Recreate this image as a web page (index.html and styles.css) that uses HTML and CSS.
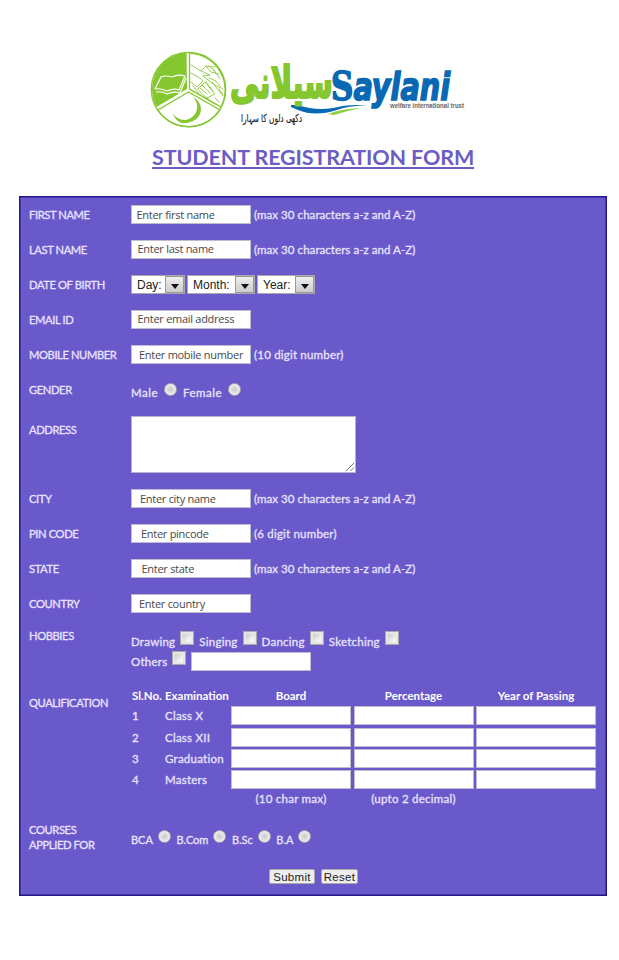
FILE: index.html
```html
<!DOCTYPE html>
<html lang="en">
<head>
<meta charset="utf-8">
<title>Student Registration Form</title>
<link rel="stylesheet" href="styles.css">
</head>
<body>
<header class="header">
<svg class="logo" viewBox="0 0 320 86" width="320" height="86" role="img" aria-label="Saylani Welfare International Trust">
<!-- emblem -->
<path d="M38 41 L37.500 4.500 A37 37 0 0 0 7.500 59Z" fill="#85c72f"/>
<path d="M40.500 41 V5 A37 37 0 0 1 72 59Z" fill="#fff" stroke="#85c72f" stroke-width="1.300"/>
<path d="M39.500 44 L9 62 A37 37 0 0 0 71 62Z" fill="#fff" stroke="#85c72f" stroke-width="1.300"/>
<path d="M6 41 L12 29 Q16 27 23 29 Q29 26 36 28 L30 42 Q25 40 18 43 Q11 40 6 41Z M7 44 Q12 43 18 46 Q25 43 31 45 L37 30" fill="none" stroke="#fff" stroke-width="1.200" stroke-linejoin="round"/>
<path d="M44 49 C56 55 55 73 37 75 C31 76 26 72 23.500 65 C28 72 35 73 40 71 C49 67 51 56 44 49Z" fill="#85c72f"/>
<g fill="none" stroke="#8bc83d" stroke-width=".9" stroke-linecap="round" stroke-linejoin="round">
<path d="M42 17 L52 23 L57 18 L66 19 M42 25 L51 30 L54 33 L48 39 L42 34 M49 41 L56 34 L66 46 L58 50Z M52 23 L61 27 L54 28 L63 35 L71 40 M63 34 L74 48 M57 49 L65 56 M57 18 L62 24 L70 26 M44 38 L50 46 L62 54 M60 30 L67 33 L74 42"/>
<path d="M50 39 L58 46 M53 37 L61 45 M57 34 L64 43 M64 21 L71 31 M60 18 L66 23 M70 41 L74 47 M66 50 L70 54"/>
</g>
<circle cx="39.500" cy="41.500" r="37.200" fill="none" stroke="#85c72f" stroke-width="1.300"/>
<!-- word mark -->
<path d="M142 57 L149 57 Q166 63 184 60 Q202 55 219 58 Q203 57 188 62 Q166 69 149 62 L142 59Z" fill="#0968b3"/>
<path d="M179 66 Q191 61 212 60 Q197 63 185 67Z" fill="#91cd42"/>
<text class="urdu-mark" x="184" y="50" direction="rtl" textLength="103" lengthAdjust="spacingAndGlyphs">سیلانی</text>
<text class="urdu-line" x="153" y="74" direction="rtl" textLength="61" lengthAdjust="spacingAndGlyphs">دکھی دلوں کا سہارا</text>
<text class="word-mark" x="182" y="52" textLength="119" lengthAdjust="spacingAndGlyphs"><tspan class="word-s">S</tspan>aylani</text>
<text class="word-line" x="241" y="59.500" textLength="74" lengthAdjust="spacingAndGlyphs">welfare international trust</text>
</svg>
<h1 class="title">STUDENT REGISTRATION FORM</h1>
</header>
<main class="form">
<div class="row"><span class="label">FIRST NAME</span><span class="input">Enter first name</span><span class="hint">(max 30 characters a-z and A-Z)</span></div>
<div class="row"><span class="label">LAST NAME</span><span class="input ph-last">Enter last name</span><span class="hint">(max 30 characters a-z and A-Z)</span></div>
<div class="row"><span class="label">DATE OF BIRTH</span><span class="select s-day">Day:<i class="arrow"></i></span><span class="select s-month">Month:<i class="arrow"></i></span><span class="select s-year">Year:<i class="arrow"></i></span></div>
<div class="row"><span class="label">EMAIL ID</span><span class="input ph-last">Enter email address</span></div>
<div class="row"><span class="label">MOBILE NUMBER</span><span class="input ph-mobile">Enter mobile number</span><span class="hint digits">(10 digit number)</span></div>
<div class="row"><span class="label">GENDER</span><div class="options gender"><span class="opt">Male</span><i class="radio"></i><span class="opt">Female</span><i class="radio"></i></div></div>
<div class="row address"><span class="label">ADDRESS</span><div class="textarea"><svg width="10" height="10" viewBox="0 0 10 10"><path d="M1 9 L9 1 M5.500 9 L9 5.500" stroke="#777" fill="none"/></svg></div></div>
<div class="row"><span class="label">CITY</span><span class="input ph-city">Enter city name</span><span class="hint">(max 30 characters a-z and A-Z)</span></div>
<div class="row"><span class="label">PIN CODE</span><span class="input ph-pin">Enter pincode</span><span class="hint digits">(6 digit number)</span></div>
<div class="row"><span class="label">STATE</span><span class="input ph-state">Enter state</span><span class="hint">(max 30 characters a-z and A-Z)</span></div>
<div class="row"><span class="label">COUNTRY</span><span class="input ph-mobile">Enter country</span></div>
<div class="row hobbies"><span class="label">HOBBIES</span><div class="stack">
<div class="options"><span class="opt">Drawing</span><i class="check"></i><span class="opt">Singing</span><i class="check"></i><span class="opt">Dancing</span><i class="check"></i><span class="opt">Sketching</span><i class="check"></i></div>
<div class="options others"><span class="opt">Others</span><i class="check"></i><span class="input"></span></div></div></div>
<div class="row qualification"><span class="label">QUALIFICATION</span><div class="table">
<b class="head-left">Sl.No.</b><b class="head-left">Examination</b><b>Board</b><b>Percentage</b><b>Year of Passing</b>
<span>1</span><span>Class X</span><i class="cell"></i><i class="cell"></i><i class="cell"></i>
<span>2</span><span>Class XII</span><i class="cell"></i><i class="cell"></i><i class="cell"></i>
<span>3</span><span>Graduation</span><i class="cell"></i><i class="cell"></i><i class="cell"></i>
<span>4</span><span>Masters</span><i class="cell"></i><i class="cell"></i><i class="cell"></i>
<span></span><span></span><span class="note">(10 char max)</span><span class="note">(upto 2 decimal)</span><span></span>
</div></div>
<div class="row courses"><span class="label">COURSES<br>APPLIED FOR</span><div class="options"><span class="opt">BCA</span><i class="radio"></i><span class="opt">B.Com</span><i class="radio"></i><span class="opt">B.Sc</span><i class="radio"></i><span class="opt">B.A</span><i class="radio"></i></div></div>
<div class="actions"><span class="button submit">Submit</span><span class="button reset">Reset</span></div>
</main>
</body>
</html>
```
FILE: styles.css
```css
* { box-sizing: border-box; }
body { margin: 0; width: 619px; height: 960px; background: #fff; font-family: Lato, "Open Sans", sans-serif; overflow: hidden; }
i { font-style: normal; display: block; flex: none; }
.header { height: 196px; padding-top: 48px; }
.logo { display: block; margin-left: 149px; overflow: visible; }
.urdu-mark { font: bold 45px "DejaVu Sans", sans-serif; fill: #85c72f; stroke: #85c72f; stroke-width: 2.2px; }
.urdu-line { font: 11px "DejaVu Sans", sans-serif; fill: #222; stroke: #222; stroke-width: .2px; }
.word-mark { font: italic bold 37px "DejaVu Sans", sans-serif; fill: #0968b3; stroke: #0968b3; stroke-width: 1.6px; }
.word-s { font: bold 40px "DejaVu Serif", serif; }
.word-line { font: bold 6.5px "Liberation Sans", sans-serif; fill: #666; }
.title { margin: 9px 0 0 152px; width: 322px; font-size: 21.5px; letter-spacing: -.12px; line-height: 28px; font-weight: 700; color: #6c5dc4; white-space: nowrap; text-decoration: underline; text-decoration-thickness: 1.5px; text-underline-offset: 2px; }
.form { margin-left: 19px; width: 588px; height: 700px; border: 1px solid #22178a; box-shadow: inset 0 0 0 .5px #22178a; background: #6a59cb; color: #e9e3ff; font-size: 11.5px; font-weight: 400; -webkit-text-stroke: .3px currentColor; letter-spacing: .3px; }
.row { height: 35px; display: flex; align-items: center; padding-left: 9px; }
.label { width: 102px; flex: none; white-space: nowrap; line-height: 15px; font-size: 11.2px; letter-spacing: -.4px; }
.input { width: 120px; height: 19px; flex: none; background: #fff; border: 1px solid #c0bccf; color: #484848; font: 400 11px/17px "Open Sans", sans-serif; letter-spacing: -.28px; -webkit-text-stroke: 0; white-space: nowrap; padding-left: 4.5px; }
.ph-last { padding-left: 5.5px; line-height: 16px; }
.ph-mobile { padding-left: 7px; }
.ph-city { padding-left: 8px; }
.ph-pin { padding-left: 9px; }
.ph-state { padding-left: 9.5px; }
.hint { margin-left: 3px; white-space: nowrap; letter-spacing: .06px; }
.digits { letter-spacing: .2px; }
.select { height: 19px; background: #fff; border: 1px solid #aaa; display: flex; justify-content: space-between; align-items: center; color: #222; font: 12px "Liberation Sans", sans-serif; letter-spacing: 0; -webkit-text-stroke: 0; padding-left: 5px; margin-right: 2px; }
.s-day { width: 54px; }
.s-month { width: 68px; }
.s-year { width: 58px; }
.arrow { width: 19px; height: 17px; border: 1px solid #999; background: linear-gradient(#eee, #ccc); display: flex; align-items: center; justify-content: center; padding-top: 4px; }
.arrow::before { content: ""; border: 4.5px solid transparent; border-top: 5px solid #111; border-bottom: 0; }
.options { display: flex; align-items: center; white-space: nowrap; }
.gender { padding-top: 6px; letter-spacing: .5px; }
.radio { width: 13px; height: 13px; border-radius: 50%; border: 1px solid #aaa; background: radial-gradient(#c8c8c8, #f2f2f2 75%); margin: -6px 6px 0 6px; }
.check { width: 14px; height: 14px; border: 1px solid #aaa; background: linear-gradient(135deg, #bbb, #f6f6f6 70%); box-shadow: inset 0 0 0 2px #e6e6e6; margin: -7px 5px 0 5px; }
.address { height: 74px; align-items: flex-start; padding-top: 9px; }
.address .label { margin-top: 6px; }
.textarea { width: 225px; height: 57px; background: #fff; border: 1px solid #b7b2cc; display: flex; align-items: flex-end; justify-content: flex-end; }
.hobbies { height: 62px; align-items: flex-start; }
.hobbies .label { margin-top: 7px; }
.stack { padding-top: 10px; letter-spacing: .25px; }
.stack .options { height: 20px; }
.qualification { height: 130px; align-items: flex-start; }
.qualification .label { margin-top: 12px; }
.table { display: grid; grid-template-columns: 33px 66px 122.5px 122.5px 120px; grid-template-rows: 18px repeat(4, 19px) 14px; row-gap: 2.3px; padding: 3px 0 0 1px; align-items: center; white-space: nowrap; letter-spacing: .25px; }
.table b { color: #fff; text-align: center; font-weight: 700; letter-spacing: 0; -webkit-text-stroke: 0; }
.table b:not(.head-left) { width: 120px; }
.table .head-left { text-align: left; }
.cell { width: 120px; height: 19px; background: #fff; border: 1px solid #c0bccf; }
.note { width: 120px; text-align: center; }
.courses { height: 48px; }
.courses .options { padding-top: 4px; font-size: 11px; letter-spacing: 0; }
.courses .radio { margin-left: 5px; margin-right: 5.5px; }
.actions { height: 32px; display: flex; gap: 6px; padding: 8px 0 0 249px; }
.button { height: 15px; border: 1px solid #aaa; border-radius: 2px; background: #eee; color: #222; font: 11.5px/14px "Liberation Sans", sans-serif; -webkit-text-stroke: 0; text-align: center; }
.submit { width: 46px; }
.reset { width: 37px; }
```
